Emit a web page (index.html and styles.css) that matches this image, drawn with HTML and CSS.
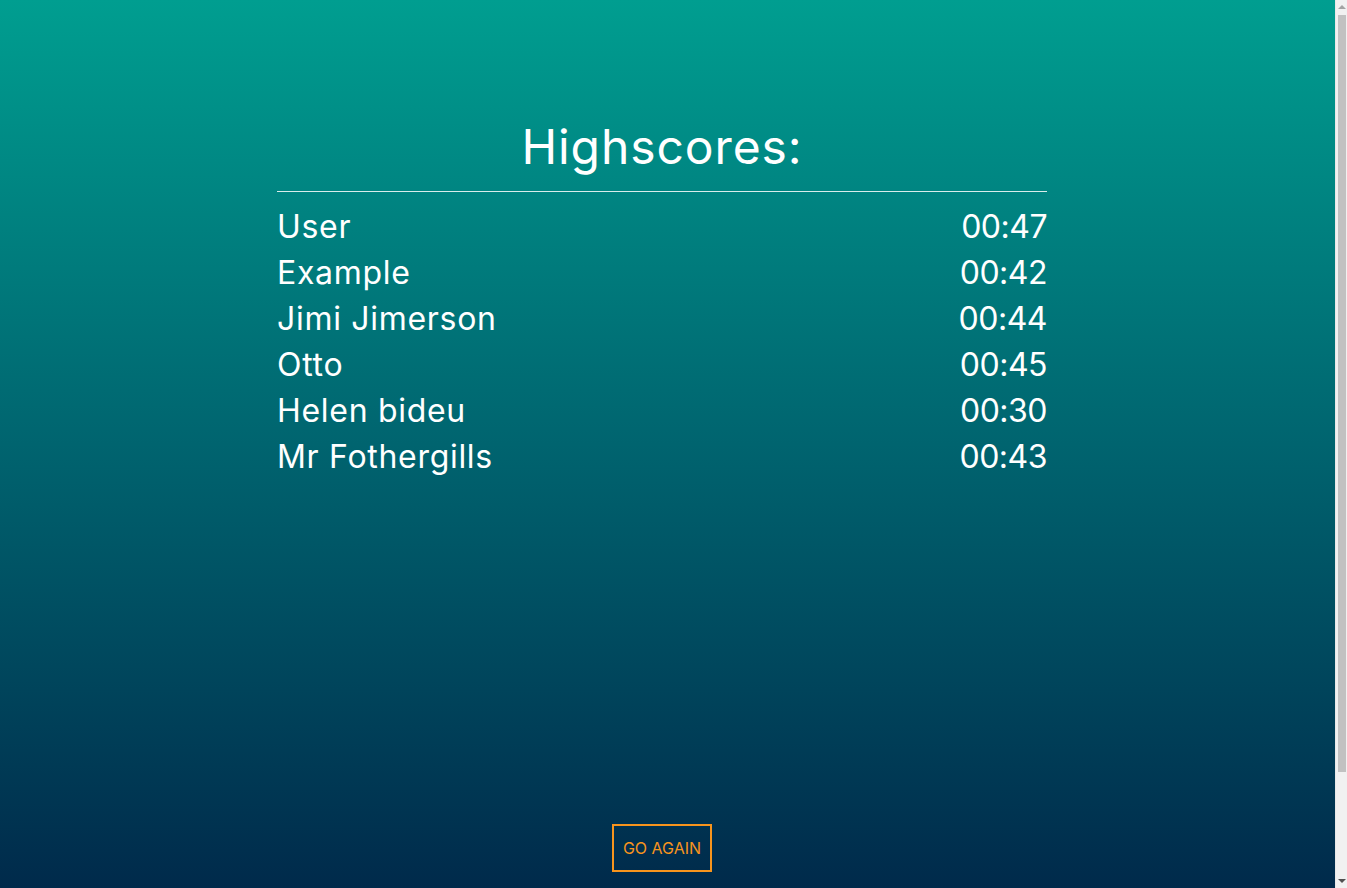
FILE: index.html
```html
<!DOCTYPE html>
<html lang="en">
<head>
<meta charset="utf-8">
<title>Highscores</title>
<link rel="stylesheet" href="styles.css">
</head>
<body>
  <div class="screen">
    <section class="board">
      <h1 class="board-title">Highscores:</h1>
      <ul class="scores">
        <li class="score-row"><span class="name">User</span><span class="time">00:47</span></li>
        <li class="score-row"><span class="name">Example</span><span class="time">00:42</span></li>
        <li class="score-row"><span class="name">Jimi Jimerson</span><span class="time">00:44</span></li>
        <li class="score-row"><span class="name">Otto</span><span class="time">00:45</span></li>
        <li class="score-row"><span class="name">Helen bideu</span><span class="time">00:30</span></li>
        <li class="score-row"><span class="name">Mr Fothergills</span><span class="time">00:43</span></li>
      </ul>
    </section>
    <button class="again-btn" type="button">GO AGAIN</button>
  </div>
  <div class="scrollbar" aria-hidden="true">
    <span class="sb-arrow sb-up"></span>
    <span class="sb-thumb"></span>
    <span class="sb-arrow sb-down"></span>
  </div>
</body>
</html>
```
FILE: styles.css
```css
html, body {
  margin: 0;
  padding: 0;
  overflow: hidden;
}
body {
  font-family: Inter, "Noto Sans", sans-serif;
  color: #fff;
  background: #002a4b;
}
.screen {
  height: 100vh;
  box-sizing: border-box;
  background: linear-gradient(to bottom, #009e90 0%, #00646f 50%, #002a4b 100%);
  display: flex;
  flex-direction: column;
  align-items: center;
  padding: 111px 23px 16px 0;
}
.board {
  width: 770px;
  flex: 1;
}
.board-title {
  margin: 0;
  font-size: 48px;
  font-weight: 400;
  line-height: 72px;
  letter-spacing: 0.9px;
  text-align: center;
  padding-bottom: 8px;
  border-bottom: 1px solid rgba(255, 255, 255, 0.85);
}
.scores {
  list-style: none;
  margin: 12px 0 0;
  padding: 0;
}
.score-row {
  display: flex;
  justify-content: space-between;
  font-size: 32px;
  line-height: 46px;
}
.name {
  letter-spacing: 0.7px;
}
.time {
  letter-spacing: -0.5px;
}
.again-btn {
  width: 100px;
  height: 48px;
  box-sizing: border-box;
  background: transparent;
  border: 2px solid #f7941d;
  color: #f7941d;
  font-family: Inter, "Noto Sans", sans-serif;
  font-size: 16px;
  font-weight: 400;
  padding: 0;
}
.scrollbar {
  position: fixed;
  top: 0;
  right: 0;
  width: 12px;
  height: 100vh;
  background: #f1f1f1;
  border-left: 1px solid #e8e8e8;
  box-sizing: border-box;
  display: flex;
  flex-direction: column;
  align-items: center;
}
.sb-arrow {
  width: 0;
  height: 0;
  border-left: 4px solid transparent;
  border-right: 4px solid transparent;
  margin: 5px 0 4px;
}
.sb-up {
  border-bottom: 4px solid #a3a3a3;
}
.sb-down {
  border-top: 4px solid #505050;
  margin: auto 0 5px;
}
.sb-thumb {
  width: 8px;
  height: 757px;
  margin-top: 2px;
  background: #c1c1c1;
}
```
